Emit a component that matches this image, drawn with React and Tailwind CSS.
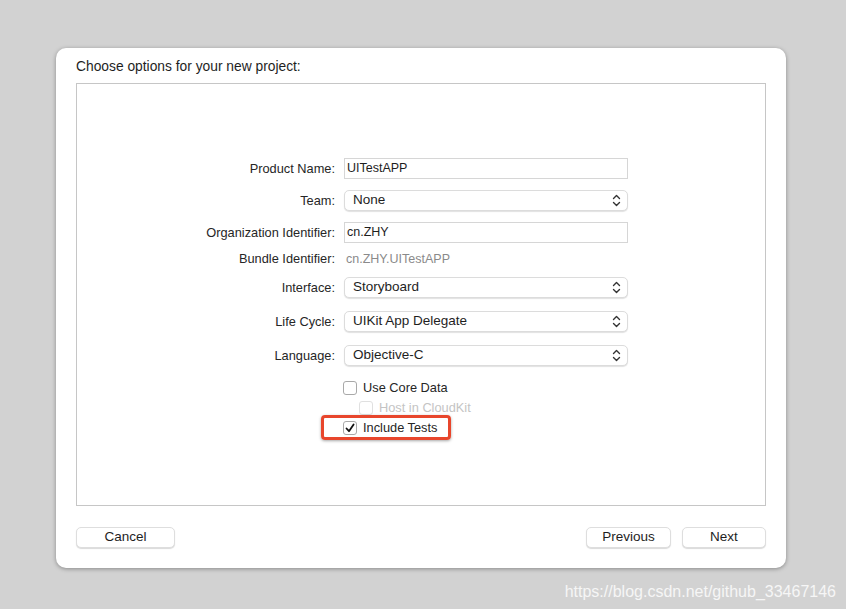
import React from "react";

const font = { fontFamily: '"Liberation Sans", Arial, sans-serif' };

function Chevrons() {
  return (
    <svg width="9" height="13" viewBox="0 0 9 13" fill="none" stroke="#333" strokeWidth="1.4" strokeLinecap="round" strokeLinejoin="round">
      <path d="M1.5 4.5 L4.5 1.5 L7.5 4.5" />
      <path d="M1.5 8.5 L4.5 11.5 L7.5 8.5" />
    </svg>
  );
}

function Row({ label, className = "", children }) {
  return (
    <div className={`flex items-center ${className}`}>
      <div className="w-[259px] pr-[1px] text-right text-[12.8px] text-[#262626]">{label}</div>
      <div className="ml-[8px] w-[284px]">{children}</div>
    </div>
  );
}

function TextField({ value }) {
  return (
    <div className="h-[21px] border border-[#d6d6d6] bg-white px-[2px] text-[12.5px] leading-[19px] text-[#1e1e1e]">
      {value}
    </div>
  );
}

function Popup({ value }) {
  return (
    <div className="flex h-[21px] items-center justify-between rounded-[5px] border border-[#dcdcdc] bg-white pl-[8px] pr-[6px] text-[13.5px] text-[#1e1e1e] shadow-[0_1px_1px_rgba(0,0,0,0.12)]">
      <span>{value}</span>
      <Chevrons />
    </div>
  );
}

function Check({ checked, disabled }) {
  return (
    <div
      className={`flex h-[14px] w-[14px] items-center justify-center rounded-[3px] border bg-white ${
        disabled ? "border-[#e0e0e0]" : "border-[#a9a9a9]"
      }`}
    >
      {checked && (
        <svg width="10" height="10" viewBox="0 0 10 10" fill="none" stroke="#111" strokeWidth="1.8" strokeLinecap="round" strokeLinejoin="round">
          <path d="M1.5 5.5 L4 8.2 L8.6 1.4" />
        </svg>
      )}
    </div>
  );
}

function Button({ children, className = "" }) {
  return (
    <div
      className={`flex h-[21px] items-center justify-center rounded-[5px] border border-[#dedede] bg-white text-[13.5px] text-[#1e1e1e] shadow-[0_1px_1px_rgba(0,0,0,0.15)] ${className}`}
    >
      {children}
    </div>
  );
}

export default function App() {
  return (
    <div className="flex h-[609px] w-[846px] flex-col bg-[#d2d2d2]" style={font}>
      {/* dialog */}
      <div className="ml-[56px] mt-[48px] flex h-[520px] w-[730px] flex-col rounded-[10px] bg-white px-[20px] shadow-[0_1px_4px_rgba(0,0,0,0.35)]">
        <div className="mt-[11px] text-[13.8px] leading-[16px] text-[#1e1e1e]">Choose options for your new project:</div>

        {/* options box */}
        <div className="mt-[8px] flex h-[423px] flex-col border border-[#c6c6c6] pt-[74px]">
          <Row label="Product Name:">
            <TextField value="UITestAPP" />
          </Row>
          <Row label="Team:" className="mt-[11px]">
            <Popup value="None" />
          </Row>
          <Row label="Organization Identifier:" className="mt-[11px]">
            <TextField value="cn.ZHY" />
          </Row>
          <Row label="Bundle Identifier:" className="mt-[7px] h-[18px]">
            <div className="pl-[2px] text-[12.5px] text-[#8a8a8a]">cn.ZHY.UITestAPP</div>
          </Row>
          <Row label="Interface:" className="mt-[9px]">
            <Popup value="Storyboard" />
          </Row>
          <Row label="Life Cycle:" className="mt-[13px]">
            <Popup value="UIKit App Delegate" />
          </Row>
          <Row label="Language:" className="mt-[13px]">
            <Popup value="Objective-C" />
          </Row>

          <div className="ml-[266px] mt-[13px] flex h-[18px] items-center gap-[6px] text-[12.8px] text-[#262626]">
            <Check />
            <span>Use Core Data</span>
          </div>
          <div className="ml-[282px] mt-[2px] flex h-[18px] items-center gap-[6px] text-[12.8px] text-[#c4c4c4]">
            <Check disabled />
            <span>Host in CloudKit</span>
          </div>
          <div className="relative ml-[266px] mt-[2px] flex h-[18px] items-center gap-[6px] text-[12.8px] text-[#262626]">
            <Check checked />
            <span>Include Tests</span>
            <div className="absolute left-[-22px] top-[-4px] h-[25px] w-[130px] rounded-[4px] border-[3px] border-[#e8462c] shadow-[0_1px_3px_rgba(0,0,0,0.35)]" />
          </div>
        </div>

        {/* footer */}
        <div className="mt-[21px] flex items-center">
          <Button className="w-[99px]">Cancel</Button>
          <div className="flex-1" />
          <Button className="w-[85px]">Previous</Button>
          <Button className="ml-[11px] w-[84px]">Next</Button>
        </div>
      </div>

      <div className="mr-[10px] mt-[12px] text-right text-[16px] text-[#f6f6f6]">https://blog.csdn.net/github_33467146</div>
    </div>
  );
}
